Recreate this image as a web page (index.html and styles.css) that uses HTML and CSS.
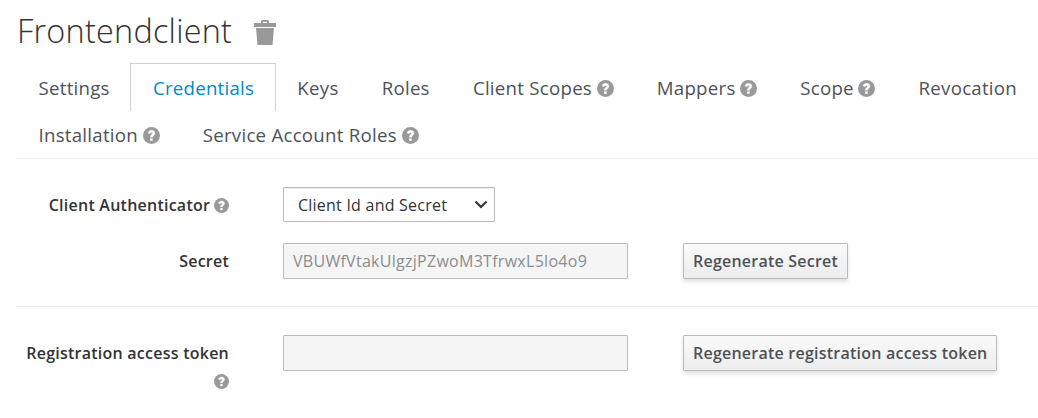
FILE: index.html
```html
<!DOCTYPE html>
<html lang="en">
<head>
<meta charset="utf-8">
<title>Frontendclient</title>
<link rel="stylesheet" href="styles.css">
</head>
<body>
<svg class="defs" width="0" height="0" aria-hidden="true">
  <symbol id="help" viewBox="0 0 16 16">
    <circle cx="8" cy="8" r="8" fill="#999"/>
    <path d="M4.700 5.700C5 4 6.300 3.100 8 3.100c1.900 0 3.300 1.100 3.300 2.800 0 2.100-2.300 2.200-2.300 3.700H6.800c0-2.300 2-2.500 2-3.600 0-.6-.4-.8-.9-.8-.6 0-.9.4-1.100 1.200z" fill="#fff" stroke="#fff" stroke-width=".3"/>
    <rect x="6.700" y="10.700" width="2.400" height="2.300" fill="#fff"/>
  </symbol>
</svg>
<main class="page">
  <header class="title">
    <h1>Frontendclient</h1>
    <svg class="trash" viewBox="0 0 22 25" width="22" height="25"><path fill="#999" fill-rule="evenodd" d="M0 3h7V1.2Q7 0 8.2 0h5.6Q15 0 15 1.2V3h7v4H0zM9 1.8V3h4V1.8zM2 8h18l-1.5 17h-15z"/></svg>
  </header>
  <nav class="tabs">
    <a class="tab">Settings</a>
    <a class="tab active">Credentials</a>
    <a class="tab">Keys</a>
    <a class="tab">Roles</a>
    <a class="tab">Client Scopes <svg class="help"><use href="#help"/></svg></a>
    <a class="tab">Mappers <svg class="help"><use href="#help"/></svg></a>
    <a class="tab">Scope <svg class="help"><use href="#help"/></svg></a>
    <a class="tab">Revocation</a>
    <a class="tab">Installation <svg class="help"><use href="#help"/></svg></a>
    <a class="tab">Service Account Roles <svg class="help"><use href="#help"/></svg></a>
  </nav>
  <form class="form">
    <div class="row authenticator">
      <label class="label">Client Authenticator <svg class="help small"><use href="#help"/></svg></label>
      <div class="select"><span>Client Id and Secret</span><svg width="14" height="9" viewBox="0 0 14 9"><path d="M1.5 1.5L7 7l5.500-5.500" fill="none" stroke="#333" stroke-width="2.200"/></svg></div>
    </div>
    <div class="row secret">
      <label class="label">Secret</label>
      <div class="field">VBUWfVtakUlgzjPZwoM3TfrwxL5lo4o9</div>
      <button type="button" class="button">Regenerate Secret</button>
    </div>
    <div class="row token">
      <label class="label">Registration access token <svg class="help small"><use href="#help"/></svg></label>
      <div class="field"></div>
      <button type="button" class="button">Regenerate registration access token</button>
    </div>
  </form>
</main>
</body>
</html>
```
FILE: styles.css
```css
* { box-sizing: border-box; }
body { margin: 0; background: #fff; color: #333; font: 16px/28px "Open Sans", sans-serif; overflow: hidden; }
.defs { display: block; height: 0; }
.page { padding-left: 16px; width: 1038px; height: 418px; }
.title { display: flex; gap: 22px; height: 63px; padding-top: 10px; }
h1 { margin: 0; padding-left: 1px; font-size: 32.4px; font-weight: 300; line-height: 40px; letter-spacing: .24px; }
.trash { margin-top: 10px; }
.tabs { display: flex; flex-wrap: wrap; align-content: flex-start; height: 96px; border-bottom: 1px solid #ededed; }
.tab { height: 48px; margin-right: -1.4px; padding: 11px 21px 0 21.5px; border: 1px solid transparent; border-bottom: 0; font-size: 18.67px; line-height: 26px; letter-spacing: .26px; color: #4d5258; white-space: nowrap; }
.tab:nth-child(n+9) { margin-top: -1px; }
.active { border-color: #d1d1d1; color: #0088ce; }
.help { width: 17px; height: 17px; margin-left: -.5px; vertical-align: -2px; }
.small { width: 15px; height: 15px; }
.row { display: flex; align-items: flex-start; }
.label { width: 213px; margin-right: 54px; padding-top: 4px; text-align: right; font-weight: 600; letter-spacing: .24px; }
.authenticator { padding-top: 28px; height: 84px; }
.secret { height: 63px; }
.token { padding-top: 28px; border-top: 1px solid #ededed; }
.select { display: flex; align-items: center; justify-content: space-between; width: 212px; height: 35px; padding: 0 6px 0 14px; border: 1px solid #bbb; border-radius: 1px; box-shadow: inset 0 1px 1px rgba(0,0,0,.075); letter-spacing: .23px; }
.field { width: 345px; height: 36px; padding: 3px 9px; border: 1px solid #bbb; border-radius: 1px; background: #f5f5f5; color: #8b8d8f; letter-spacing: .28px; }
.button { height: 36px; margin-left: 55px; padding: 0 9px 1px; border: 1px solid #bbb; border-radius: 1px; background: linear-gradient(#fafafa, #ededed); box-shadow: 0 3px 4px rgba(3,3,3,.12); color: #4d5258; font: 600 16px/26px "Open Sans", sans-serif; letter-spacing: .23px; white-space: nowrap; }
```
